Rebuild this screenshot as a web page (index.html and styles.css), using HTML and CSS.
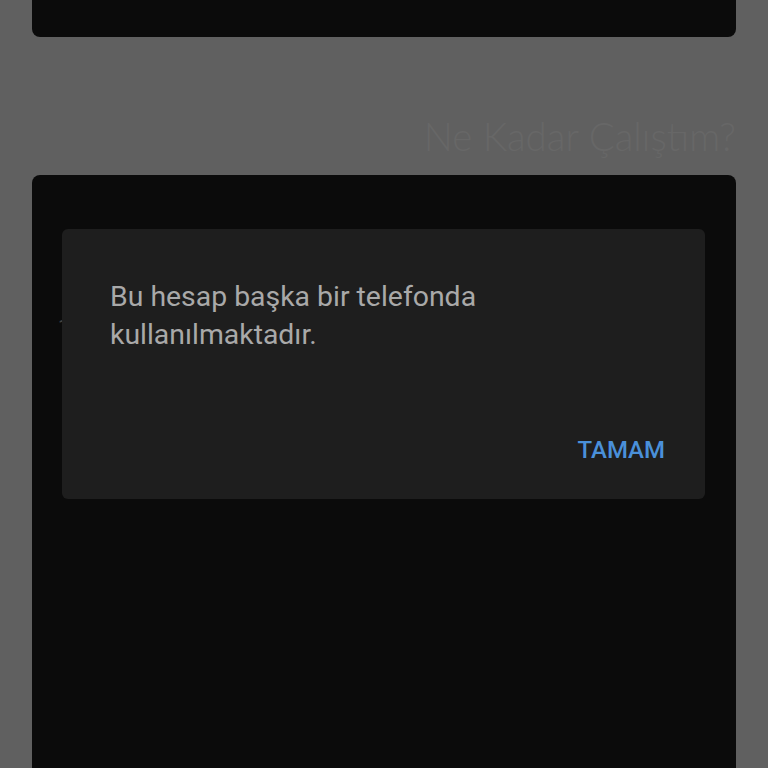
FILE: index.html
```html
<!DOCTYPE html>
<html>
  <head>
    <meta charset="utf-8">
    <meta name="viewport" content="width=device-width, initial-scale=1">
    <title>Ne Kadar Çalıştım?</title>
    <link rel="stylesheet" href="styles.css">
  </head>
  <body>
    <main class="page">
      <div class="card top-card"></div>
      <div class="section-title">
        <h2>Ne Kadar Çalıştım?</h2>
      </div>
      <div class="card stats-card">
        <span class="stat-value">1</span>
      </div>
    </main>

    <!-- alert shown when the account is already signed in elsewhere -->
    <div class="dialog">
      <p class="dialog-message">Bu hesap başka bir telefonda kullanılmaktadır.</p>
      <div class="dialog-actions">
        <button class="dialog-button">TAMAM</button>
      </div>
    </div>
  </body>
</html>
```

FILE: styles.css
```css
html, body {
  margin: 0;
  height: 100%;
  overflow: hidden;
}
body {
  background: #606060;
  font-family: Roboto, "Noto Sans", sans-serif;
}
.page {
  display: flex;
  flex-direction: column;
  padding: 0 32px;
}
.card {
  background: #0b0b0b;
  border-radius: 8px;
}
.top-card {
  height: 37px;
  border-top-left-radius: 0;
  border-top-right-radius: 0;
}
.section-title {
  height: 138px;
  display: flex;
  justify-content: flex-end;
  align-items: flex-end;
}
.section-title h2 {
  margin: 0 0 16px 0;
  font-family: Lato, sans-serif;
  font-weight: 300;
  font-size: 38.5px;
  color: #676767;
}
.stats-card {
  height: 600px;
  padding: 140px 0 0 26px;
  box-sizing: border-box;
}
.stat-value {
  color: #444;
  font-size: 20px;
}
.dialog {
  position: absolute;
  top: 229px;
  left: 62px;
  width: 643px;
  height: 270px;
  box-sizing: border-box;
  background: #1e1e1e;
  border-radius: 6px;
  padding: 49px 48px 35px 48px;
  display: flex;
  flex-direction: column;
}
.dialog-message {
  margin: 0;
  width: 420px;
  font-size: 28.4px;
  line-height: 37.5px;
  color: #a9a9a9;
}
.dialog-actions {
  display: flex;
  justify-content: flex-end;
  margin-top: auto;
}
.dialog-button {
  background: none;
  border: none;
  padding: 0;
  margin-right: -8px;
  font-family: Roboto, sans-serif;
  font-weight: 500;
  font-size: 24px;
  line-height: 28px;
  color: #4a90d9;
}
```
